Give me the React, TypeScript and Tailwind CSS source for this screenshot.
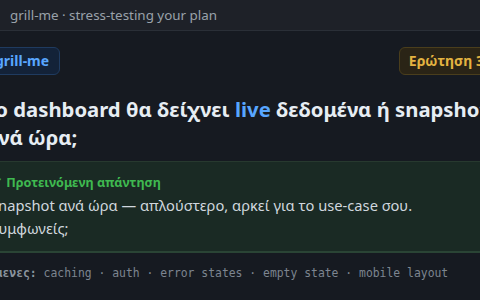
export default function App() {
  return (
    <div className="flex h-[300px] w-[480px] flex-col overflow-hidden bg-[#161a21] font-['Noto_Sans',sans-serif]">
      {/* window title */}
      <div className="flex h-[31px] shrink-0 items-center border-b border-[#2a2f37] bg-[#1e2128] px-[10px] text-[13.4px] text-[#9aa1aa]">
        grill-me · stress-testing your plan
      </div>

      <div className="flex flex-1 overflow-hidden">
        <div className="-ml-[25px] flex w-[540px] shrink-0 flex-col">
          <div className="mt-[16px] flex items-center justify-between pl-[9px]">
            <span className="rounded-md border border-[#1f3b60] bg-[#132238] px-[10px] py-[3px] text-[14px] leading-[20px] font-bold text-[#58a6ff]">
              grill-me
            </span>
            <span className="rounded-md border border-[#4a3e1c] bg-[#2a2416] px-[9px] py-[3px] text-[14px] leading-[20px] font-bold text-[#e3b341]">
              Ερώτηση 3 / 5
            </span>
          </div>

          <h1 className="mt-[20px] pl-[10px] text-[20.3px] leading-[28px] font-bold text-[#e6edf3]">
            Το dashboard θα δείχνει <span className="text-[#58a6ff]">live</span> δεδομένα ή snapshot
            ανά ώρα;
          </h1>

          <div className="mt-[10px] border-t border-[#27392f] border-b-2 border-b-[#2a4435] bg-[#1a2a24] pt-[12px] pr-[40px] pb-[11px] pl-[17px]">
            <div className="text-[12.6px] leading-[18px] font-bold text-[#3fb950]">
              ✓ Προτεινόμενη απάντηση
            </div>
            <p className="mt-[2px] -ml-[2px] text-[14.7px] leading-[23px] text-[#d0d7de]">
              Snapshot ανά ώρα — απλούστερο, αρκεί για το use-case σου. Συμφωνείς;
            </p>
          </div>

          <div className="pt-[12px] font-['DejaVu_Sans_Mono',monospace] text-[11.4px] text-[#7d8590]">
            <span className="font-bold text-[#8b949e]">Επόμενες:</span> caching · auth · error states ·
            empty state · mobile layout
          </div>
        </div>
      </div>
    </div>
  );
}
